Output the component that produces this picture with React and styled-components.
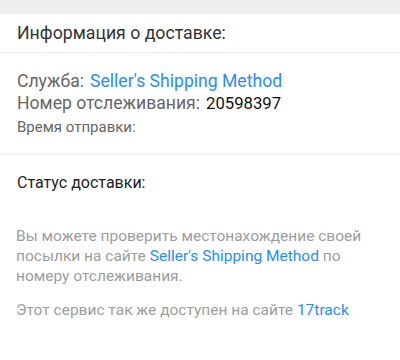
import React from "react";
import styled, { createGlobalStyle } from "styled-components";

const GlobalStyle = createGlobalStyle`
  html, body {
    margin: 0;
    padding: 0;
    background: #ffffff;
    font-family: Roboto, "Noto Sans", sans-serif;
  }
`;

const Page = styled.div`
  width: 400px;
  height: 360px;
  background: #fff;
  overflow: hidden;
`;

const TopBand = styled.div`
  height: 14px;
  background: #eeeeee;
`;

const Header = styled.div`
  height: 38px;
  display: flex;
  align-items: center;
  padding: 0 17px;
  font-size: 17.7px;
  color: #333;
  border-bottom: 1px solid #eeeeee;
`;

const InfoBlock = styled.div`
  padding: 17px 17px 14px;
  display: flex;
  flex-direction: column;
  border-bottom: 2px solid #f4f4f4;
`;

const Row = styled.div`
  display: flex;
  align-items: baseline;
  gap: 6px;
  font-size: ${(p) => (p.$small ? "15px" : "17.6px")};
  line-height: ${(p) => (p.$small ? "24px" : "22px")};
  color: #666;
`;

const Link = styled.span`
  color: #2b8cf7;
`;

const Value = styled.span`
  color: #111;
  font-size: 16.7px;
`;

const StatusTitle = styled.div`
  padding: 17px 17px 0;
  font-size: 16px;
  line-height: 22px;
  color: #222;
`;

const Note = styled.p`
  margin: ${(p) => p.$top || "0"} 30px 0 16px;
  font-size: 15.5px;
  line-height: 20px;
  color: #9d9d9d;
`;

const App = () => (
  <>
    <GlobalStyle />
    <Page>
      <TopBand />
      <Header>Информация о доставке:</Header>
      <InfoBlock>
        <Row>
          Служба: <Link>Seller's Shipping Method</Link>
        </Row>
        <Row>
          Номер отслеживания: <Value>20598397</Value>
        </Row>
        <Row $small>Время отправки:</Row>
      </InfoBlock>
      <StatusTitle>Статус доставки:</StatusTitle>
      <Note $top="32px">
        Вы можете проверить местонахождение своей посылки на сайте{" "}
        <Link>Seller's Shipping Method</Link> по номеру отслеживания.
      </Note>
      <Note $top="14px">
        Этот сервис так же доступен на сайте <Link>17track</Link>
      </Note>
    </Page>
  </>
);

export default App;
